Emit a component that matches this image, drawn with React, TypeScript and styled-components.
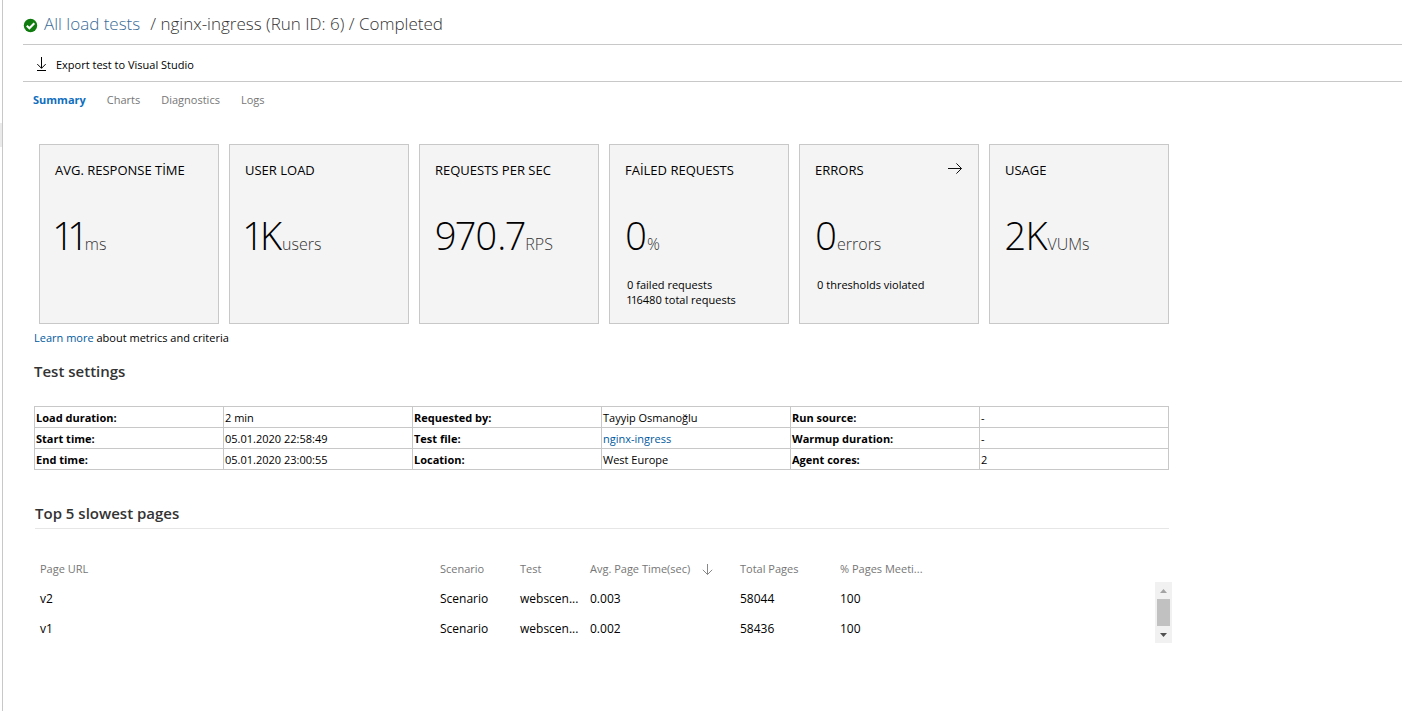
import React from 'react';
import styled, { createGlobalStyle } from 'styled-components';

const GlobalStyle = createGlobalStyle`
  * { box-sizing: border-box; }
  body {
    margin: 0;
    background: #fff;
    color: #000;
    font-family: 'Open Sans', 'Noto Sans', sans-serif;
    font-size: 11px;
    line-height: 16px;
  }
  a { color: #005a9e; text-decoration: none; }
  button {
    padding: 0;
    border: 0;
    background: none;
    color: inherit;
    font: inherit;
    cursor: pointer;
  }
`;

const Shell = styled.div`
  display: flex;
  min-height: 100vh;
`;

const Rail = styled.div`
  flex: none;
  width: 3px;
  padding-top: 123px;
  border-right: 1px solid #c8c8c8;
`;

const RailHandle = styled.div`
  height: 24px;
  background: #eaeaea;
`;

const Main = styled.main`
  flex: 1;
  min-width: 0;
  padding: 0 10px 24px 20px;
`;

const TitleBar = styled.header`
  display: flex;
  align-items: center;
  height: 45px;
  padding-top: 3px;
  border-bottom: 1px solid #c8c8c8;
`;

const StatusIcon = styled.svg`
  flex: none;
  width: 15px;
  height: 15px;
  margin-top: 3px;
`;

const Title = styled.h1`
  margin: 0 0 0 6px;
  color: #333;
  font-size: 17px;
  font-weight: 300;
  line-height: 24px;
`;

const TitleLink = styled.a`
  margin-right: 10px;
  color: #3b6c98;
`;

const Toolbar = styled.div`
  display: flex;
  align-items: center;
  height: 37px;
  padding: 4px 12px 0;
  border-bottom: 1px solid #c8c8c8;
`;

const ToolButton = styled.button`
  display: flex;
  align-items: center;
  gap: 8px;
`;

const Tabs = styled.nav`
  display: flex;
  gap: 21px;
  padding: 10px 10px 0;
`;

const Tab = styled.a<{ $active?: boolean }>`
  color: ${(p) => (p.$active ? '#106ebe' : '#767676')};
  font-weight: ${(p) => (p.$active ? 700 : 400)};
`;

const Content = styled.div`
  max-width: 1149px;
  padding: 36px 3px 0 11px;
`;

const Cards = styled.section`
  display: grid;
  grid-template-columns: repeat(6, minmax(0, 1fr));
  gap: 10px;
  padding-left: 5px;
`;

const Card = styled.article`
  display: flex;
  flex-direction: column;
  min-height: 180px;
  padding: 15px;
  border: 1px solid #c8c8c8;
  background: #f4f4f4;
`;

const CardHead = styled.div`
  display: flex;
  justify-content: space-between;
  height: 20px;
`;

const CardTitle = styled.h2`
  margin: 0;
  font-size: 13px;
  font-weight: 400;
  line-height: 20px;
  white-space: nowrap;
`;

const CardButton = styled.button`
  display: flex;
  align-items: center;
`;

const Metric = styled.p`
  display: flex;
  align-items: baseline;
  margin: 29px 0 0;
  font-size: 38px;
  font-variant-numeric: proportional-nums;
  font-weight: 300;
  line-height: 52px;
`;

const Unit = styled.span`
  color: #333;
  font-size: 16px;
`;

const Notes = styled.p`
  margin: 7px 0 0 2px;
  font-variant-numeric: proportional-nums;
  line-height: 15px;
  white-space: pre-line;
`;

const Learn = styled.p`
  margin: 6px 0 0;
`;

const Heading = styled.h2`
  margin: 0;
  color: #333;
  font-size: 15px;
  font-weight: 600;
  line-height: 20px;
`;

const SettingsSection = styled.section`
  padding-top: 15px;
`;

const SettingsTable = styled.table`
  width: 100%;
  margin-top: 25px;
  border-collapse: collapse;
  table-layout: fixed;
`;

const cell = `
  height: 21px;
  padding: 2px 1px 0;
  border: 1px solid #c8c8c8;
  text-align: left;
`;

const Label = styled.th`
  ${cell}
  font-weight: 700;
`;

const Value = styled.td`
  ${cell}
`;

const PagesSection = styled.section`
  padding: 33px 0 0 1px;
`;

const PagesHeading = styled(Heading)`
  padding-bottom: 5px;
  border-bottom: 1px solid #e6e6e6;
`;

const PagesGrid = styled.div`
  display: flex;
  align-items: flex-end;
  margin: 26px -3px 0 0;
`;

const PagesTable = styled.table`
  flex: 1;
  width: 100%;
  min-width: 0;
  border-collapse: collapse;
  table-layout: fixed;
`;

const Column = styled.col<{ $width?: number }>`
  width: ${(p) => (p.$width ? `${p.$width}px` : 'auto')};
`;

const Head = styled.th`
  height: 28px;
  padding: 0 5px;
  color: #767676;
  font-weight: 400;
  text-align: left;
  white-space: nowrap;
`;

const SortButton = styled.button`
  display: flex;
  align-items: center;
  gap: 12px;
`;

const Cell = styled.td`
  height: 30px;
  padding: 2px 5px 0;
  font-size: 12px;
  white-space: nowrap;
`;

const Scroller = styled.div`
  display: flex;
  flex: none;
  flex-direction: column;
  width: 17px;
  height: 61px;
  background: #f1f1f1;
`;

const ScrollButton = styled.button`
  display: flex;
  align-items: center;
  justify-content: center;
  height: 17px;
`;

const Thumb = styled.div`
  flex: 1;
  margin: 0 2px;
  background: #c1c1c1;
`;

const CheckBadge = () => (
  <StatusIcon viewBox="0 0 15 15" role="img" aria-label="Completed">
    <circle cx="7.5" cy="7.5" r="6.7" fill="#107c10" />
    <path d="M3.8 7.7 6.4 10.2 11.3 5.2" fill="none" stroke="#fff" strokeWidth="2.1" />
  </StatusIcon>
);

const DownloadIcon = () => (
  <svg width="13" height="16" viewBox="0 0 13 16" fill="none" stroke="#000" aria-hidden="true">
    <path d="M6.5 0v11.3M2.3 7.1l4.2 4.2 4.2-4.2M2 13.5h9" />
  </svg>
);

const ArrowRight = () => (
  <svg width="16" height="14" viewBox="0 0 16 14" fill="none" stroke="#111" aria-hidden="true">
    <path d="M1 5.5h13.5M9.4 .4l5.1 5.1-5.1 5.1" />
  </svg>
);

const SortDown = () => (
  <svg width="11" height="13" viewBox="0 0 11 13" fill="none" stroke="#888" aria-hidden="true">
    <path d="M5.5 1v10.5M.8 6.8l4.7 4.7 4.7-4.7" />
  </svg>
);

const Triangle = ({ up }: { up?: boolean }) => (
  <svg width="7" height="4" viewBox="0 0 7 4" fill={up ? '#a3a3a3' : '#505050'} aria-hidden="true">
    <path d={up ? 'M0 4 3.5 0 7 4z' : 'M0 0h7L3.5 4z'} />
  </svg>
);

const tabs = ['Summary', 'Charts', 'Diagnostics', 'Logs'];

const metrics = [
  { title: 'AVG. RESPONSE TİME', value: '11', unit: 'ms' },
  { title: 'USER LOAD', value: '1K', unit: 'users' },
  { title: 'REQUESTS PER SEC', value: '970.7', unit: 'RPS' },
  { title: 'FAİLED REQUESTS', value: '0', unit: '%', notes: '0 failed requests\n116480 total requests' },
  { title: 'ERRORS', value: '0', unit: 'errors', notes: '0 thresholds violated', link: true },
  { title: 'USAGE', value: '2K', unit: 'VUMs' },
];

const settings: [string, React.ReactNode][][] = [
  [['Load duration:', '2 min'], ['Requested by:', 'Tayyip Osmanoğlu'], ['Run source:', '-']],
  [['Start time:', '05.01.2020 22:58:49'], ['Test file:', <a href="#file">nginx-ingress</a>], ['Warmup duration:', '-']],
  [['End time:', '05.01.2020 23:00:55'], ['Location:', 'West Europe'], ['Agent cores:', '2']],
];

const pages = [
  ['v2', 'Scenario', 'webscen...', '0.003', '58044', '100'],
  ['v1', 'Scenario', 'webscen...', '0.002', '58436', '100'],
];

export default function App() {
  return (
    <Shell>
      <GlobalStyle />
      <Rail>
        <RailHandle />
      </Rail>
      <Main>
        <TitleBar>
          <CheckBadge />
          <Title>
            <TitleLink href="#tests">All load tests</TitleLink>/ nginx-ingress (Run ID: 6) / Completed
          </Title>
        </TitleBar>
        <Toolbar>
          <ToolButton type="button">
            <DownloadIcon />
            Export test to Visual Studio
          </ToolButton>
        </Toolbar>
        <Tabs>
          {tabs.map((name, i) => (
            <Tab key={name} href={`#${name.toLowerCase()}`} $active={i === 0}>
              {name}
            </Tab>
          ))}
        </Tabs>
        <Content>
          <Cards>
            {metrics.map((m) => (
              <Card key={m.title}>
                <CardHead>
                  <CardTitle>{m.title}</CardTitle>
                  {m.link && (
                    <CardButton type="button" aria-label="Show errors">
                      <ArrowRight />
                    </CardButton>
                  )}
                </CardHead>
                <Metric>
                  {m.value}
                  <Unit>{m.unit}</Unit>
                </Metric>
                {m.notes && <Notes>{m.notes}</Notes>}
              </Card>
            ))}
          </Cards>
          <Learn>
            <a href="#learn">Learn more</a> about metrics and criteria
          </Learn>
          <SettingsSection>
            <Heading>Test settings</Heading>
            <SettingsTable>
              <tbody>
                {settings.map((row, i) => (
                  <tr key={i}>
                    {row.map(([label, value]) => (
                      <React.Fragment key={label}>
                        <Label scope="row">{label}</Label>
                        <Value>{value}</Value>
                      </React.Fragment>
                    ))}
                  </tr>
                ))}
              </tbody>
            </SettingsTable>
          </SettingsSection>
          <PagesSection>
            <PagesHeading>Top 5 slowest pages</PagesHeading>
            <PagesGrid>
              <PagesTable>
                <colgroup>
                  <Column $width={400} />
                  <Column $width={80} />
                  <Column $width={70} />
                  <Column $width={150} />
                  <Column $width={100} />
                  <Column $width={100} />
                  <Column />
                </colgroup>
                <thead>
                  <tr>
                    <Head>Page URL</Head>
                    <Head>Scenario</Head>
                    <Head>Test</Head>
                    <Head aria-sort="descending">
                      <SortButton type="button">
                        Avg. Page Time(sec)
                        <SortDown />
                      </SortButton>
                    </Head>
                    <Head>Total Pages</Head>
                    <Head>% Pages Meeti...</Head>
                    <td />
                  </tr>
                </thead>
                <tbody>
                  {pages.map((row) => (
                    <tr key={row[0]}>
                      {row.map((text, i) => (
                        <Cell key={i}>{text}</Cell>
                      ))}
                      <td />
                    </tr>
                  ))}
                </tbody>
              </PagesTable>
              <Scroller>
                <ScrollButton type="button" aria-label="Scroll up">
                  <Triangle up />
                </ScrollButton>
                <Thumb />
                <ScrollButton type="button" aria-label="Scroll down">
                  <Triangle />
                </ScrollButton>
              </Scroller>
            </PagesGrid>
          </PagesSection>
        </Content>
      </Main>
    </Shell>
  );
}
